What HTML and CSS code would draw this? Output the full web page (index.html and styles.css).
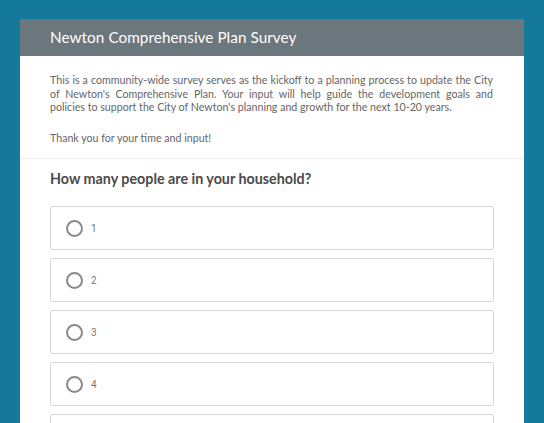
FILE: index.html
```html
<!DOCTYPE html>
<html>
<head>
<meta charset="utf-8">
<link rel="stylesheet" href="styles.css">
</head>
<body>
<div class="card">
  <div class="header">Newton Comprehensive Plan Survey</div>
  <div class="intro">
    <p><span class="jl">This is a community-wide survey serves as the kickoff to a planning process to update the City</span> <span class="jl">of Newton's Comprehensive Plan. Your input will help guide the development goals and</span> <span class="ll">policies to support the City of Newton's planning and growth for the next 10-20 years.</span></p>
    <p>Thank you for your time and input!</p>
  </div>
  <div class="question">
    <h2>How many people are in your household?</h2>
    <div class="options">
      <label class="option"><span class="radio"></span><span class="lbl">1</span></label>
      <label class="option"><span class="radio"></span><span class="lbl">2</span></label>
      <label class="option"><span class="radio"></span><span class="lbl">3</span></label>
      <label class="option"><span class="radio"></span><span class="lbl">4</span></label>
      <label class="option"><span class="radio"></span></label>
    </div>
  </div>
</div>
</body>
</html>
```
FILE: styles.css
```css
html, body {
  margin: 0;
  padding: 0;
}
html {
  height: 423px;
  overflow: hidden;
}
body {
  background: #14799a;
  font-family: Lato, "Open Sans", sans-serif;
  height: 423px;
  box-sizing: border-box;
  overflow: hidden;
  padding: 19px 20px 0 20px;
}
.card {
  background: #fff;
  width: 504px;
}
.header {
  background: #6b767d;
  color: #fff;
  height: 37px;
  line-height: 37px;
  padding-left: 30px;
  font-size: 15.3px;
  letter-spacing: 0.05px;
}
.intro {
  padding: 17px 31px 14px 30px;
  border-bottom: 1px solid #eeeeee;
  color: #666;
  font-size: 10.65px;
  line-height: 13.5px;
}
.intro p {
  margin: 0;
}
.intro .jl {
  display: block;
  text-align: justify;
  text-align-last: justify;
  white-space: nowrap;
}
.intro .ll {
  display: block;
}
.intro p + p {
  margin-top: 17px;
}
.question {
  padding: 11px 30px 0 30px;
}
.question h2 {
  margin: 0 0 18px 0;
  font-size: 14.3px;
  font-weight: 700;
  color: #4a4a4a;
  line-height: 18px;
}
.options {
  display: flex;
  flex-direction: column;
  gap: 8px;
}
.option {
  display: flex;
  align-items: center;
  height: 42px;
  border: 1px solid #d8d8d8;
  border-radius: 2px;
  padding-left: 15px;
}
.radio {
  width: 13px;
  height: 13px;
  border: 2px solid #8a8a8a;
  border-radius: 50%;
  box-sizing: content-box;
}
.lbl {
  margin-left: 8px;
  font-family: Roboto, sans-serif;
  font-size: 10px;
  color: #777;
}
```
